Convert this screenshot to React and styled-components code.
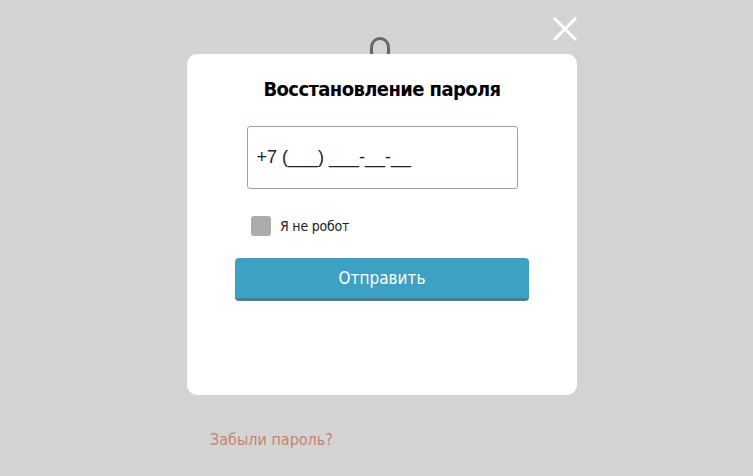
import React from "react";
import styled, { createGlobalStyle } from "styled-components";

const Global = createGlobalStyle`
  html, body { margin: 0; padding: 0; }
  body {
    background: #d4d4d4;
    font-family: "DejaVu Sans Condensed", "DejaVu Sans", sans-serif;
    font-stretch: condensed;
    width: 753px;
    height: 476px;
    overflow: hidden;
  }
`;

const Page = styled.div`
  display: flex;
  flex-direction: column;
  width: 340px;
  padding: 37px 0 0 210px;
`;

const LockWrap = styled.div`
  align-self: center;
  display: flex;
  height: 20px;
`;

const ForgotLink = styled.a`
  margin-top: 372px;
  align-self: flex-start;
  color: #c88270;
  font-size: 16px;
  text-decoration: none;
  line-height: 22px;
`;

const Overlay = styled.div`
  position: fixed;
  inset: 0;
  display: flex;
  align-items: flex-start;
  padding: 54px 0 0 187px;
`;

const Modal = styled.div`
  width: 390px;
  height: 341px;
  box-sizing: border-box;
  background: #fff;
  border-radius: 10px;
  display: flex;
  flex-direction: column;
  align-items: center;
  padding-top: 22px;
`;

const Title = styled.h2`
  margin: 0;
  font-size: 20px;
  letter-spacing: -0.6px;
  line-height: 27px;
  font-weight: 700;
  color: #000;
`;

const PhoneInput = styled.div`
  margin-top: 23px;
  width: 271px;
  height: 63px;
  box-sizing: border-box;
  border: 1px solid #93a3b3;
  border-radius: 3px;
  display: flex;
  align-items: center;
  padding: 0 9px;
  font-family: "Liberation Sans", Arial, sans-serif;
  font-size: 18px;
  color: #222;
`;

const CheckRow = styled.label`
  margin-top: 27px;
  align-self: flex-start;
  margin-left: 64px;
  display: flex;
  align-items: center;
  gap: 9px;
  font-size: 14px;
  letter-spacing: -0.2px;
  color: #222;
`;

const Box = styled.span`
  width: 20px;
  height: 20px;
  border-radius: 3px;
  background: #acacac;
`;

const SubmitButton = styled.button`
  margin-top: 22px;
  width: 294px;
  height: 43px;
  box-sizing: border-box;
  border: none;
  border-bottom: 3px solid #4f7d92;
  border-radius: 4px;
  background: #3da1c4;
  color: #fff;
  font-family: inherit;
  font-stretch: condensed;
  font-size: 17px;
  padding: 0;
`;

const Close = styled.button`
  position: absolute;
  left: 552px;
  top: 16px;
  width: 26px;
  height: 26px;
  padding: 0;
  border: none;
  background: none;
  display: flex;
`;

export default function App() {
  return (
    <>
      <Global />
      <Page>
        <LockWrap>
          <svg width="22" height="20" viewBox="0 0 22 20">
            <path d="M2.5 20 V10 A8.5 8.5 0 0 1 19.5 10 V20" fill="none" stroke="#676767" strokeWidth="3" />
          </svg>
        </LockWrap>
        <ForgotLink href="#">Забыли пароль?</ForgotLink>
      </Page>
      <Overlay>
        <Modal>
          <Title>Восстановление пароля</Title>
          <PhoneInput>+7 (___) ___-__-__</PhoneInput>
          <CheckRow>
            <Box />
            Я не робот
          </CheckRow>
          <SubmitButton>Отправить</SubmitButton>
        </Modal>
        <Close aria-label="Закрыть">
          <svg width="26" height="26" viewBox="0 0 26 26">
            <path d="M2 2 L24 24 M24 2 L2 24" stroke="#fff" strokeWidth="3" />
          </svg>
        </Close>
      </Overlay>
    </>
  );
}
